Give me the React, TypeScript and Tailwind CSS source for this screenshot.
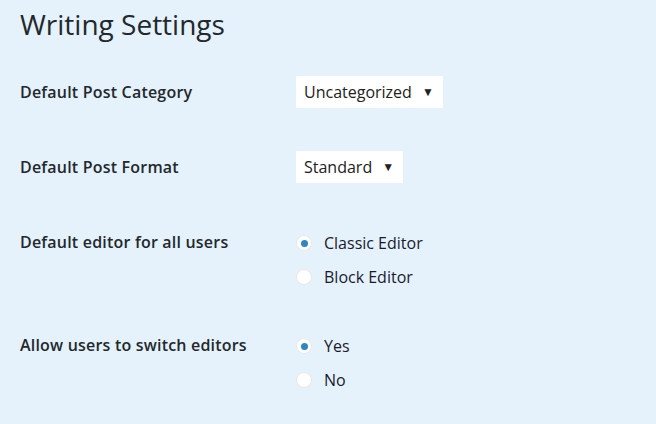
export default function App() {
  const f = { fontFamily: '"Open Sans", "Noto Sans", sans-serif' };
  const Radio = ({ on, label }: { on?: boolean; label: string }) => (
    <div className="flex items-center h-[34px]">
      <span className="w-4 h-4 rounded-full bg-white flex items-center justify-center shadow-[inset_0_0_0_1px_#e6e6e6]">
        {on && <span className="w-[7px] h-[7px] rounded-full bg-[#2e86c7]" />}
      </span>
      <span className="ml-3 text-[16px] text-[#1a1a2e]">{label}</span>
    </div>
  );
  const Select = ({ label }: { label: string }) => (
    <div className="inline-flex items-center h-[32px] bg-white pl-[8px] pr-[9px] text-[16px] text-[#222]">
      {label}
      <span className="ml-[10px] text-[12px] text-[#222]">▼</span>
    </div>
  );
  const L = "w-[276px] text-[16px] font-semibold tracking-[0.2px]";
  return (
    <div style={f} className="w-[656px] h-[424px] bg-[#e5f2fb] px-5 text-[#23282d] overflow-hidden">
      <h1 className="text-[28px] font-normal pt-[5px] leading-[38px]">Writing Settings</h1>
      <div className="flex items-center mt-[33px]">
        <div className={L}>Default Post Category</div>
        <Select label="Uncategorized" />
      </div>
      <div className="flex items-center mt-[43px]">
        <div className={L}>Default Post Format</div>
        <Select label="Standard" />
      </div>
      <div className="flex mt-[43px]">
        <div className={L + " pt-[4px]"}>Default editor for all users</div>
        <div><Radio on label="Classic Editor" /><Radio label="Block Editor" /></div>
      </div>
      <div className="flex mt-[35px]">
        <div className={L + " pt-[4px]"}>Allow users to switch editors</div>
        <div><Radio on label="Yes" /><Radio label="No" /></div>
      </div>
    </div>
  );
}
